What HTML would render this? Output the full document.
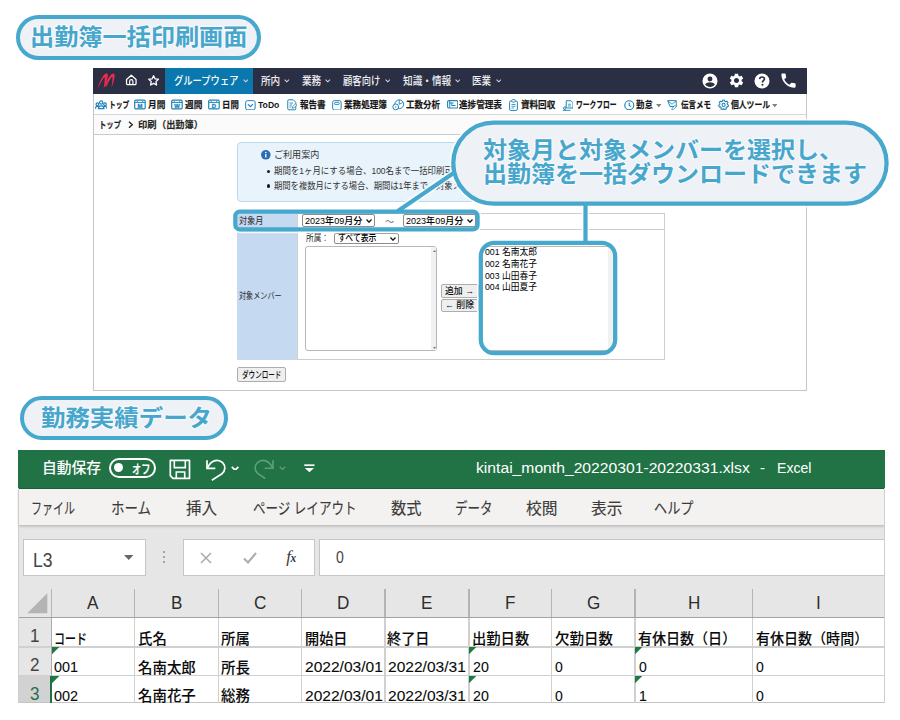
<!DOCTYPE html>
<html lang="ja"><head><meta charset="utf-8"><title>出勤簿一括印刷画面</title>
<style>
html,body{margin:0;padding:0;background:#fff}
body{width:900px;height:720px;position:relative;overflow:hidden;font-family:"Liberation Sans",sans-serif}
#p{position:absolute;left:0;top:0;width:900px;height:720px;overflow:hidden}
#p div,#p svg.a,#p svg.g,#p span.h,#p span.l{position:absolute}
svg.g{overflow:visible}
svg.g text{font-family:"Liberation Sans","Noto Sans CJK JP",sans-serif;font-size:1000px}
span.h{color:transparent;white-space:nowrap;overflow:hidden;font-family:"Liberation Sans",sans-serif}
span.l{white-space:pre;font-family:"Liberation Sans",sans-serif}
</style></head><body>
<div id="p"><div style="left:16px;top:15px;width:245px;height:45px;box-sizing:border-box;border:4px solid #47a8cd;border-radius:23px;background:#eef1f6"></div><svg class="g" style="left:30.40px;top:25.04px;width:217.40px;height:27.22px;fill:#46a6cc;stroke:#f6f8fb;stroke-width:110;stroke-linejoin:round;paint-order:stroke" viewBox="0 -880 9000 1200" preserveAspectRatio="none"><text x="0" y="0" textLength="9000" lengthAdjust="spacingAndGlyphs" font-weight="700">出勤簿一括印刷画面</text></svg><div style="left:93px;top:68px;width:714.2px;height:322.5px;box-sizing:border-box;border:1px solid #c6c6c6;background:#fff"></div><div style="left:93px;top:68px;width:714.2px;height:25.5px;background:#2b2f43"></div><div style="left:165px;top:68px;width:88.3px;height:25.5px;background:#0a78ae"></div><svg class="a" style="left:96px;top:71px" width="20" height="20" viewBox="0 0 20 20"><path fill="#ea2a4e" d="M1.500 17.800C3 12 6 5.500 9 3c1.800-1.500 3.200-.3 2.800 2.200C11.100 9.500 9.500 14 7.500 18c.6-4 1.300-8 1.300-10.800 0-1.200-.4-1.200-1-.4C5.800 9.600 3.500 14 1.500 17.800z"/><path fill="#ea2a4e" d="M8.600 15.200c1.900-4.900 4.400-9.900 7.100-12.100 1.800-1.500 3.300-.3 3 2.100-.5 4-1.600 7.600-3.200 11.300.5-3.400 1-7.200 1-9.800 0-1.200-.4-1.200-1-.4-1.700 2.300-3.400 5.600-4.900 8.900z"/></svg><svg class="a" style="left:124.500px;top:74.100px" width="12.600" height="11.700" viewBox="0 0 14 13"><path d="M1.700 6.200L7 1.400l5.300 4.800V10.500a1.200 1.200 0 0 1-1.200 1.200H2.900A1.200 1.200 0 0 1 1.700 10.500z" fill="none" stroke="#fff" stroke-width="1.400" stroke-linejoin="round"/><path d="M5.200 11.500V8a1.800 1.800 0 0 1 3.600 0v3.500" fill="none" stroke="#fff" stroke-width="1.300"/></svg><svg class="a" style="left:147.200px;top:73.800px" width="13.200" height="13.200" viewBox="0 0 24 24"><path d="M12 3.200l2.700 5.600 6.100.8-4.500 4.300 1.100 6.100L12 17.100 6.600 20l1.100-6.100L3.200 9.600l6.100-.8z" fill="none" stroke="#fff" stroke-width="2.400" stroke-linejoin="round"/></svg><svg class="g" style="left:173.80px;top:74.52px;width:64.50px;height:13.20px;fill:#fff" viewBox="0 -880 7000 1200" preserveAspectRatio="none"><text x="0" y="0" textLength="7000" lengthAdjust="spacingAndGlyphs" font-weight="500">グループウェア</text></svg><svg class="a" style="left:243px;top:79.3px" width="5.6" height="3.36" viewBox="0 0 10 6"><path d="M1 1 L5 5 L9 1" fill="none" stroke="#d4d6e0" stroke-width="1.9"/></svg><svg class="g" style="left:260.60px;top:74.52px;width:19.20px;height:13.20px;fill:#eeeff5" viewBox="0 -880 2000 1200" preserveAspectRatio="none"><text x="0" y="0" textLength="2000" lengthAdjust="spacingAndGlyphs" font-weight="500">所内</text></svg><svg class="a" style="left:284px;top:79.3px" width="5.6" height="3.36" viewBox="0 0 10 6"><path d="M1 1 L5 5 L9 1" fill="none" stroke="#d4d6e0" stroke-width="1.9"/></svg><svg class="g" style="left:302.00px;top:74.52px;width:19.20px;height:13.20px;fill:#eeeff5" viewBox="0 -880 2000 1200" preserveAspectRatio="none"><text x="0" y="0" textLength="2000" lengthAdjust="spacingAndGlyphs" font-weight="500">業務</text></svg><svg class="a" style="left:325.3px;top:79.3px" width="5.6" height="3.36" viewBox="0 0 10 6"><path d="M1 1 L5 5 L9 1" fill="none" stroke="#d4d6e0" stroke-width="1.9"/></svg><svg class="g" style="left:343.00px;top:74.52px;width:37.30px;height:13.20px;fill:#eeeff5" viewBox="0 -880 4000 1200" preserveAspectRatio="none"><text x="0" y="0" textLength="4000" lengthAdjust="spacingAndGlyphs" font-weight="500">顧客向け</text></svg><svg class="a" style="left:384.8px;top:79.3px" width="5.6" height="3.36" viewBox="0 0 10 6"><path d="M1 1 L5 5 L9 1" fill="none" stroke="#d4d6e0" stroke-width="1.9"/></svg><svg class="g" style="left:402.80px;top:74.52px;width:48.20px;height:13.20px;fill:#eeeff5" viewBox="0 -880 5000 1200" preserveAspectRatio="none"><text x="0" y="0" textLength="5000" lengthAdjust="spacingAndGlyphs" font-weight="500">知識・情報</text></svg><svg class="a" style="left:454.5px;top:79.3px" width="5.6" height="3.36" viewBox="0 0 10 6"><path d="M1 1 L5 5 L9 1" fill="none" stroke="#d4d6e0" stroke-width="1.9"/></svg><svg class="g" style="left:472.30px;top:74.52px;width:19.00px;height:13.20px;fill:#eeeff5" viewBox="0 -880 2000 1200" preserveAspectRatio="none"><text x="0" y="0" textLength="2000" lengthAdjust="spacingAndGlyphs" font-weight="500">医業</text></svg><svg class="a" style="left:495.5px;top:79.3px" width="5.6" height="3.36" viewBox="0 0 10 6"><path d="M1 1 L5 5 L9 1" fill="none" stroke="#d4d6e0" stroke-width="1.9"/></svg><svg class="a" style="left:701.500px;top:72.500px" width="16" height="16" viewBox="0 0 24 24"><circle cx="12" cy="12" r="11.300" fill="#fff"/><circle cx="12" cy="9" r="3.700" fill="#2b2f43"/><path d="M4.600 17.400c1.600-2.400 4.300-3.500 7.400-3.500s5.800 1.100 7.400 3.500c-1.900 2.400-4.400 3.600-7.400 3.600s-5.500-1.200-7.400-3.600z" fill="#2b2f43"/></svg><svg class="a" style="left:727.500px;top:72px" width="17" height="17" viewBox="0 0 24 24"><path fill="#fff" d="M19.140 12.940c.04-.3.060-.61.060-.94 0-.32-.020-.64-.07-.94l2.030-1.580c.18-.14.23-.41.12-.61l-1.920-3.320c-.12-.22-.37-.29-.59-.22l-2.390.96c-.5-.38-1.030-.7-1.620-.94l-.36-2.540c-.04-.24-.24-.41-.48-.41h-3.840c-.24 0-.43.17-.47.41l-.36 2.540c-.59.24-1.130.57-1.620.94l-2.390-.96c-.22-.08-.47 0-.59.220L2.740 8.870c-.12.210-.080.470.12.610l2.030 1.580c-.05.300-.09.630-.09.940s.020.640.07.940l-2.030 1.580c-.18.140-.23.410-.12.610l1.920 3.320c.12.220.37.290.59.220l2.390-.96c.5.380 1.030.7 1.620.94l.36 2.540c.05.240.24.410.48.410h3.840c.24 0 .44-.17.470-.41l.36-2.540c.59-.24 1.130-.56 1.620-.94l2.390.96c.22.080.47 0 .59-.22l1.920-3.320c.12-.22.070-.47-.12-.61l-2.010-1.580zM12 15.600c-1.980 0-3.600-1.620-3.600-3.600s1.620-3.600 3.600-3.600 3.600 1.620 3.600 3.600-1.620 3.600-3.600 3.600z"/></svg><svg class="a" style="left:754px;top:72.500px" width="16" height="16" viewBox="0 0 24 24"><circle cx="12" cy="12" r="11.300" fill="#fff"/><path d="M8.400 9.300c.2-2.100 1.700-3.300 3.700-3.300 2.100 0 3.500 1.200 3.500 3 0 1.300-.7 2-1.700 2.700-.9.600-1.200 1.100-1.200 2.100v.3" fill="none" stroke="#2b2f43" stroke-width="2.500"/><circle cx="12.700" cy="17.700" r="1.600" fill="#2b2f43"/></svg><svg class="a" style="left:779px;top:71px" width="19" height="19" viewBox="0 0 24 24"><path fill="#fff" d="M6.620 10.790c1.440 2.830 3.760 5.140 6.590 6.590l2.200-2.200c.27-.27.670-.36 1.020-.24 1.120.37 2.330.57 3.570.57.550 0 1 .45 1 1V20c0 .55-.45 1-1 1-9.390 0-17-7.610-17-17 0-.55.450-1 1-1h3.500c.55 0 1 .45 1 1 0 1.250.2 2.450.57 3.570.11.350.03.740-.25 1.020l-2.200 2.200z"/></svg><div style="left:94px;top:93.5px;width:712.2px;height:20.5px;background:#fff;border-bottom:1px solid #d6d6d6"></div><svg class="a" style="left:94.800px;top:100px" width="12.400" height="9.500" viewBox="0 0 25 19"><g fill="none" stroke="#1f84ba" stroke-width="2.400"><circle cx="12.500" cy="5" r="3.300"/><circle cx="4.800" cy="8.500" r="2.700"/><circle cx="20.200" cy="8.500" r="2.700"/><path d="M6.800 17.500c.4-4 2.800-5.800 5.700-5.800s5.300 1.800 5.700 5.800zM1 17.500c0-3 1.300-4.800 3.600-4.800 1 0 1.800.3 2.400 1M24 17.500c0-3-1.300-4.800-3.600-4.800-1 0-1.800.3-2.400 1"/></g></svg><svg class="g" style="left:108.70px;top:100.22px;width:20.30px;height:11.16px;fill:#161616;stroke:#161616;stroke-width:22" viewBox="0 -880 3000 1200" preserveAspectRatio="none"><text x="0" y="0" textLength="3000" lengthAdjust="spacingAndGlyphs" font-weight="700">トップ</text></svg><svg class="a" style="left:134.4px;top:99.400px" width="12" height="11" viewBox="0 0 12 11"><rect x="0.700" y="1.200" width="10.500" height="8.700" rx="1.100" fill="#fff" stroke="#1f84ba" stroke-width="1.200"/><path d="M0.700 3.500H11.200" stroke="#1f84ba" stroke-width="0.900"/><path d="M3.200 1.700V2.900M8.700 1.700V2.900" stroke="#1f84ba" stroke-width="1"/><text x="5.950" y="8.800" font-size="5.900" font-weight="bold" text-anchor="middle" fill="#1f84ba" stroke="#1f84ba" stroke-width="0.300" font-family="Liberation Sans">M</text></svg><svg class="g" style="left:147.70px;top:100.22px;width:17.30px;height:11.16px;fill:#161616;stroke:#161616;stroke-width:22" viewBox="0 -880 2000 1200" preserveAspectRatio="none"><text x="0" y="0" textLength="2000" lengthAdjust="spacingAndGlyphs" font-weight="700">月間</text></svg><svg class="a" style="left:171px;top:99.400px" width="12" height="11" viewBox="0 0 12 11"><rect x="0.700" y="1.200" width="10.500" height="8.700" rx="1.100" fill="#fff" stroke="#1f84ba" stroke-width="1.200"/><path d="M0.700 3.500H11.200" stroke="#1f84ba" stroke-width="0.900"/><path d="M3.200 1.700V2.900M8.700 1.700V2.900" stroke="#1f84ba" stroke-width="1"/><text x="5.950" y="8.800" font-size="5.900" font-weight="bold" text-anchor="middle" fill="#1f84ba" stroke="#1f84ba" stroke-width="0.300" font-family="Liberation Sans">W</text></svg><svg class="g" style="left:185.00px;top:100.22px;width:17.30px;height:11.16px;fill:#161616;stroke:#161616;stroke-width:22" viewBox="0 -880 2000 1200" preserveAspectRatio="none"><text x="0" y="0" textLength="2000" lengthAdjust="spacingAndGlyphs" font-weight="700">週間</text></svg><svg class="a" style="left:207.5px;top:99.400px" width="12" height="11" viewBox="0 0 12 11"><rect x="0.700" y="1.200" width="10.500" height="8.700" rx="1.100" fill="#fff" stroke="#1f84ba" stroke-width="1.200"/><path d="M0.700 3.500H11.200" stroke="#1f84ba" stroke-width="0.900"/><path d="M3.200 1.700V2.900M8.700 1.700V2.900" stroke="#1f84ba" stroke-width="1"/><text x="5.950" y="8.800" font-size="5.900" font-weight="bold" text-anchor="middle" fill="#1f84ba" stroke="#1f84ba" stroke-width="0.300" font-family="Liberation Sans">D</text></svg><svg class="g" style="left:222.20px;top:100.22px;width:16.80px;height:11.16px;fill:#161616;stroke:#161616;stroke-width:22" viewBox="0 -880 2000 1200" preserveAspectRatio="none"><text x="0" y="0" textLength="2000" lengthAdjust="spacingAndGlyphs" font-weight="700">日間</text></svg><svg class="a" style="left:245px;top:99.700px" width="10.800" height="10.500" viewBox="0 0 21.600 21"><rect x="1.300" y="1.300" width="19" height="18.400" rx="3.500" fill="none" stroke="#1f84ba" stroke-width="2"/><path d="M5.800 8.300l5 5 5-5" fill="none" stroke="#1f84ba" stroke-width="2.300"/></svg><span class="l" style="left:258.40px;top:99.37px;font-size:9.8px;line-height:11.27px;color:#161616;font-weight:bold;transform:scaleX(0.8787);transform-origin:0 0;">ToDo</span><svg class="a" style="left:287px;top:99.200px" width="10" height="11.600" viewBox="0 0 20 23"><path d="M3.500 1.500h9l5 5v13a2 2 0 0 1-2 2h-12a2 2 0 0 1-2-2v-16a2 2 0 0 1 2-2z" fill="none" stroke="#1f84ba" stroke-width="2"/><path d="M5 8h7M5 12h5M5 16h4" stroke="#1f84ba" stroke-width="1.800"/><path d="M10.500 18.500l1-3.500 5.500-5.500 2.500 2.500-5.500 5.500z" fill="#fff" stroke="#1f84ba" stroke-width="1.500"/></svg><svg class="g" style="left:299.70px;top:100.22px;width:25.60px;height:11.16px;fill:#161616;stroke:#161616;stroke-width:22" viewBox="0 -880 3000 1200" preserveAspectRatio="none"><text x="0" y="0" textLength="3000" lengthAdjust="spacingAndGlyphs" font-weight="700">報告書</text></svg><svg class="a" style="left:332px;top:99.600px" width="9.800" height="10.700" viewBox="0 0 19.600 21.400"><rect x="1.300" y="1.300" width="17" height="18.800" rx="3.500" fill="none" stroke="#1f84ba" stroke-width="2"/><rect x="5.300" y="4.800" width="9" height="4.200" rx="1" fill="none" stroke="#1f84ba" stroke-width="1.700"/></svg><svg class="g" style="left:344.40px;top:100.22px;width:42.90px;height:11.16px;fill:#161616;stroke:#161616;stroke-width:22" viewBox="0 -880 5000 1200" preserveAspectRatio="none"><text x="0" y="0" textLength="5000" lengthAdjust="spacingAndGlyphs" font-weight="700">業務処理簿</text></svg><svg class="a" style="left:392.300px;top:99.300px" width="12.700" height="11.400" viewBox="0 0 25.400 22.800"><circle cx="14.500" cy="10.500" r="8.800" fill="none" stroke="#1f84ba" stroke-width="2"/><circle cx="7.500" cy="15.800" r="5.800" fill="#fff" stroke="#1f84ba" stroke-width="2"/><circle cx="7.500" cy="15.800" r="1.400" fill="#1f84ba"/><path d="M14.500 10.500V2M14.500 10.500l7-3.500" stroke="#1f84ba" stroke-width="1.800" fill="none"/></svg><svg class="g" style="left:406.40px;top:100.22px;width:33.90px;height:11.16px;fill:#161616;stroke:#161616;stroke-width:22" viewBox="0 -880 4000 1200" preserveAspectRatio="none"><text x="0" y="0" textLength="4000" lengthAdjust="spacingAndGlyphs" font-weight="700">工数分析</text></svg><svg class="a" style="left:446.700px;top:100.200px" width="11.400" height="8.600" viewBox="0 0 22.800 17.200"><rect x="1.200" y="1.200" width="20.400" height="14.800" rx="2.500" fill="none" stroke="#1f84ba" stroke-width="2.200"/><path d="M5.500 1.500V15.500M5.500 6H13M9.500 6V11H17" fill="none" stroke="#1f84ba" stroke-width="2"/></svg><svg class="g" style="left:459.40px;top:100.22px;width:42.90px;height:11.16px;fill:#161616;stroke:#161616;stroke-width:22" viewBox="0 -880 5000 1200" preserveAspectRatio="none"><text x="0" y="0" textLength="5000" lengthAdjust="spacingAndGlyphs" font-weight="700">進捗管理表</text></svg><svg class="a" style="left:509.200px;top:99px" width="9" height="12" viewBox="0 0 18 24"><rect x="1.200" y="4" width="15.600" height="18.800" rx="2.500" fill="none" stroke="#1f84ba" stroke-width="2"/><rect x="5.500" y="1.200" width="7" height="5" rx="1.500" fill="#fff" stroke="#1f84ba" stroke-width="1.800"/><path d="M5 11h8M5 14.500h8M5 18h5" stroke="#1f84ba" stroke-width="1.600"/></svg><svg class="g" style="left:521.40px;top:100.22px;width:34.20px;height:11.16px;fill:#161616;stroke:#161616;stroke-width:22" viewBox="0 -880 4000 1200" preserveAspectRatio="none"><text x="0" y="0" textLength="4000" lengthAdjust="spacingAndGlyphs" font-weight="700">資料回収</text></svg><svg class="a" style="left:561.700px;top:99.500px" width="11.600" height="11.200" viewBox="0 0 23.200 22.400"><path d="M8.500 1.500h9.500l4 4v10.500H8.500z" fill="none" stroke="#1f84ba" stroke-width="2"/><path d="M12 8.500h6M12 12h6" stroke="#1f84ba" stroke-width="1.600"/><path d="M1.500 20.800H17M2 16.500l4.500-3.500v7z" fill="none" stroke="#1f84ba" stroke-width="1.800"/></svg><svg class="g" style="left:575.50px;top:100.22px;width:40.60px;height:11.16px;fill:#161616;stroke:#161616;stroke-width:22" viewBox="0 -880 6000 1200" preserveAspectRatio="none"><text x="0" y="0" textLength="6000" lengthAdjust="spacingAndGlyphs" font-weight="700">ワークフロー</text></svg><svg class="a" style="left:624px;top:99.700px" width="10.500" height="10.500" viewBox="0 0 21 21"><circle cx="10.500" cy="10.500" r="9" fill="none" stroke="#1f84ba" stroke-width="2.300"/><path d="M10.500 5v6l3.800 2.300" fill="none" stroke="#1f84ba" stroke-width="2.200"/></svg><svg class="g" style="left:636.00px;top:100.22px;width:16.80px;height:11.16px;fill:#161616;stroke:#161616;stroke-width:22" viewBox="0 -880 2000 1200" preserveAspectRatio="none"><text x="0" y="0" textLength="2000" lengthAdjust="spacingAndGlyphs" font-weight="700">勤怠</text></svg><svg class="a" style="left:655.600px;top:103.600px" width="5.600" height="3.600" viewBox="0 0 6 4"><path d="M0 0h6l-3 3.800z" fill="#808080"/></svg><svg class="a" style="left:667.300px;top:99.800px" width="10.500" height="10.600" viewBox="0 0 21 21.200"><path d="M1.300 1.300H18.500V13H6z" fill="none" stroke="#1f84ba" stroke-width="2" stroke-linejoin="round"/><path d="M2 2l8 6.500 8-6.500" fill="none" stroke="#1f84ba" stroke-width="1.700"/><path d="M9.500 19.800l1-3.500 5.500-5.500 2.500 2.500-5.500 5.500z" fill="#fff" stroke="#1f84ba" stroke-width="1.500"/></svg><svg class="g" style="left:681.40px;top:100.22px;width:29.90px;height:11.16px;fill:#161616;stroke:#161616;stroke-width:22" viewBox="0 -880 4000 1200" preserveAspectRatio="none"><text x="0" y="0" textLength="4000" lengthAdjust="spacingAndGlyphs" font-weight="700">伝言メモ</text></svg><svg class="a" style="left:718.300px;top:99.300px" width="11.200" height="11.400" viewBox="0 0 24 24"><path fill="none" stroke="#1f84ba" stroke-width="2.300" stroke-linejoin="round" d="M10 2h4l.6 2.700 1.900.9 2.500-1.300 2.500 3-1.700 2.200.4 2.100 2.300 1.300-1 3.800-2.800-.1-1.400 1.600.4 2.800-3.700 1.400L12 20.300l-2 2.100-3.700-1.400.4-2.800-1.400-1.600-2.800.1-1-3.800 2.300-1.300.4-2.100L2.500 7.300l2.500-3 2.500 1.300 1.900-.9z"/><circle cx="12" cy="12.400" r="3.300" fill="none" stroke="#1f84ba" stroke-width="2.200"/></svg><svg class="g" style="left:730.70px;top:100.22px;width:39.00px;height:11.16px;fill:#161616;stroke:#161616;stroke-width:22" viewBox="0 -880 5000 1200" preserveAspectRatio="none"><text x="0" y="0" textLength="5000" lengthAdjust="spacingAndGlyphs" font-weight="700">個人ツール</text></svg><svg class="a" style="left:771.500px;top:103.600px" width="5.600" height="3.600" viewBox="0 0 6 4"><path d="M0 0h6l-3 3.800z" fill="#808080"/></svg><div style="left:94px;top:115px;width:712.2px;height:19px;background:#fbfbfb;border-bottom:1px solid #cbcbcb"></div><svg class="g" style="left:99.00px;top:120.15px;width:22.00px;height:11.52px;fill:#1e1e1e;stroke:#1e1e1e;stroke-width:14" viewBox="0 -880 3000 1200" preserveAspectRatio="none"><text x="0" y="0" textLength="3000" lengthAdjust="spacingAndGlyphs" font-weight="700">トップ</text></svg><svg class="a" style="left:127.600px;top:121.300px" width="5.500" height="7.500" viewBox="0 0 5.500 7.500"><path d="M1 .8L4.300 3.750 1 6.700" fill="none" stroke="#222" stroke-width="1.400"/></svg><svg class="g" style="left:137.70px;top:120.15px;width:18.60px;height:11.52px;fill:#1e1e1e;stroke:#1e1e1e;stroke-width:14" viewBox="0 -880 2000 1200" preserveAspectRatio="none"><text x="0" y="0" textLength="2000" lengthAdjust="spacingAndGlyphs" font-weight="700">印刷</text></svg><svg class="g" style="left:156.80px;top:120.15px;width:45.80px;height:11.52px;fill:#1e1e1e;stroke:#1e1e1e;stroke-width:14" viewBox="0 -880 5000 1200" preserveAspectRatio="none"><text x="0" y="0" textLength="5000" lengthAdjust="spacingAndGlyphs" font-weight="700">（出勤簿）</text></svg><div style="left:237px;top:142.3px;width:428px;height:60px;box-sizing:border-box;border:1px solid #b5dcf1;border-radius:4px;background:#e8f3fc"></div><svg class="a" style="left:261.300px;top:150.400px" width="9.600" height="9.600" viewBox="0 0 20 20"><circle cx="10" cy="10" r="10" fill="#2a6db3"/><rect x="8.600" y="8.500" width="2.800" height="7" fill="#fff"/><circle cx="10" cy="5.300" r="1.700" fill="#fff"/></svg><svg class="g" style="left:274.00px;top:150.22px;width:45.30px;height:11.16px;fill:#333" viewBox="0 -880 5000 1200" preserveAspectRatio="none"><text x="0" y="0" textLength="5000" lengthAdjust="spacingAndGlyphs" font-weight="400">ご利用案内</text></svg><div style="left:266.500px;top:169.700px;width:3.400px;height:3.400px;border-radius:50%;background:#1a1a1a"></div><div style="left:266.500px;top:184.300px;width:3.400px;height:3.400px;border-radius:50%;background:#1a1a1a"></div><svg class="g" style="left:274.00px;top:166.30px;width:211.78px;height:11.04px;fill:#333" viewBox="0 -880 23020 1200" preserveAspectRatio="none"><text x="0" y="0" textLength="23020" lengthAdjust="spacingAndGlyphs" font-weight="400">期間を1ヶ月にする場合、100名まで一括印刷可能です。</text></svg><svg class="g" style="left:274.00px;top:180.90px;width:311.56px;height:11.04px;fill:#333" viewBox="0 -880 33865 1200" preserveAspectRatio="none"><text x="0" y="0" textLength="33865" lengthAdjust="spacingAndGlyphs" font-weight="400">期間を複数月にする場合、期間は1年まで、対象メンバーは10名まで選択可能です。</text></svg><div style="left:236.5px;top:212.5px;width:428.5px;height:147.3px;box-sizing:border-box;border:1px solid #cdcdcd;background:#fff"></div><div style="left:236.5px;top:212.5px;width:60px;height:147.3px;background:#c5d9f1"></div><div style="left:236.5px;top:229.3px;width:428.5px;height:1px;background:#cdcdcd"></div><div style="left:296.5px;top:212.5px;width:1px;height:147.3px;background:#d0d0d0"></div><svg class="g" style="left:239.00px;top:216.28px;width:24.40px;height:10.80px;fill:#2a2a2a" viewBox="0 -880 3000 1200" preserveAspectRatio="none"><text x="0" y="0" textLength="3000" lengthAdjust="spacingAndGlyphs" font-weight="400">対象月</text></svg><svg class="g" style="left:239.00px;top:291.28px;width:42.60px;height:10.80px;fill:#2a2a2a" viewBox="0 -880 6000 1200" preserveAspectRatio="none"><text x="0" y="0" textLength="6000" lengthAdjust="spacingAndGlyphs" font-weight="400">対象メンバー</text></svg><div style="left:302px;top:214px;width:73px;height:13px;box-sizing:border-box;border:1px solid #8c8c8c;border-radius:2px;background:#fff"></div><svg class="g" style="left:305.30px;top:216.23px;width:57.30px;height:11.28px;fill:#000" viewBox="0 -880 6420 1200" preserveAspectRatio="none"><text x="0" y="0" textLength="6420" lengthAdjust="spacingAndGlyphs" font-weight="500">2023年09月分</text></svg><svg class="a" style="left:365.8px;top:218.8px" width="6" height="4" viewBox="0 0 6 4"><path d="M.5 .5L3 3.200 5.500 .5" fill="none" stroke="#111" stroke-width="1.250"/></svg><svg class="g" style="left:384.50px;top:216.88px;width:9.00px;height:10.80px;fill:#666" viewBox="0 -880 1000 1200" preserveAspectRatio="none"><text x="0" y="0" textLength="1000" lengthAdjust="spacingAndGlyphs" font-weight="400">～</text></svg><div style="left:403px;top:214px;width:73px;height:13px;box-sizing:border-box;border:1px solid #8c8c8c;border-radius:2px;background:#fff"></div><svg class="g" style="left:406.10px;top:216.23px;width:57.30px;height:11.28px;fill:#000" viewBox="0 -880 6420 1200" preserveAspectRatio="none"><text x="0" y="0" textLength="6420" lengthAdjust="spacingAndGlyphs" font-weight="500">2023年09月分</text></svg><svg class="a" style="left:466.8px;top:218.8px" width="6" height="4" viewBox="0 0 6 4"><path d="M.5 .5L3 3.200 5.500 .5" fill="none" stroke="#111" stroke-width="1.250"/></svg><svg class="g" style="left:306.00px;top:233.38px;width:23.00px;height:10.80px;fill:#2a2a2a" viewBox="0 -880 3000 1200" preserveAspectRatio="none"><text x="0" y="0" textLength="3000" lengthAdjust="spacingAndGlyphs" font-weight="400">所属：</text></svg><div style="left:334px;top:233px;width:65px;height:11px;box-sizing:border-box;border:1px solid #8c8c8c;border-radius:2px;background:#fff"></div><svg class="g" style="left:337.50px;top:233.23px;width:38.50px;height:11.28px;fill:#000" viewBox="0 -880 5000 1200" preserveAspectRatio="none"><text x="0" y="0" textLength="5000" lengthAdjust="spacingAndGlyphs" font-weight="500">すべて表示</text></svg><svg class="a" style="left:389.8px;top:236.8px" width="6" height="4" viewBox="0 0 6 4"><path d="M.5 .5L3 3.200 5.500 .5" fill="none" stroke="#111" stroke-width="1.250"/></svg><div style="left:305px;top:246px;width:132px;height:105px;box-sizing:border-box;border:1px solid #b8b8b8;border-radius:3px;background:#fff"></div><div style="left:431px;top:247px;width:5px;height:103px;background:#f1f1f1"></div><svg class="a" style="left:432.500px;top:249.500px" width="3" height="2"><path d="M0 2L1.500 0 3 2z" fill="#777"/></svg><svg class="a" style="left:432.500px;top:346.500px" width="3" height="2"><path d="M0 0L1.500 2 3 0z" fill="#777"/></svg><div style="left:441px;top:284px;width:38px;height:14px;box-sizing:border-box;border:1px solid #adadad;border-radius:2px;background:#efefef"></div><svg class="g" style="left:445.30px;top:286.22px;width:29.00px;height:11.16px;fill:#111" viewBox="0 -880 3300 1200" preserveAspectRatio="none"><text x="0" y="0" textLength="3300" lengthAdjust="spacingAndGlyphs" font-weight="500">追加 →</text></svg><div style="left:441px;top:299px;width:38px;height:13px;box-sizing:border-box;border:1px solid #adadad;border-radius:2px;background:#efefef"></div><svg class="g" style="left:445.30px;top:300.22px;width:29.00px;height:11.16px;fill:#111" viewBox="0 -880 3300 1200" preserveAspectRatio="none"><text x="0" y="0" textLength="3300" lengthAdjust="spacingAndGlyphs" font-weight="500">← 削除</text></svg><div style="left:237px;top:367px;width:49px;height:15px;box-sizing:border-box;border:1px solid #adadad;border-radius:2px;background:#efefef"></div><svg class="g" style="left:242.00px;top:370.22px;width:39.40px;height:11.16px;fill:#111" viewBox="0 -880 6000 1200" preserveAspectRatio="none"><text x="0" y="0" textLength="6000" lengthAdjust="spacingAndGlyphs" font-weight="500">ダウンロード</text></svg><div style="left:482px;top:246px;width:132px;height:105px;box-sizing:border-box;border:1px solid #b8b8b8;border-radius:3px;background:#fff"></div><div style="left:608px;top:247px;width:5px;height:103px;background:#f1f1f1"></div><svg class="g" style="left:485.20px;top:247.32px;width:52.00px;height:11.16px;fill:#000" viewBox="0 -880 5965 1200" preserveAspectRatio="none"><text x="0" y="0" textLength="5965" lengthAdjust="spacingAndGlyphs" font-weight="400">001 名南太郎</text></svg><svg class="g" style="left:485.20px;top:258.92px;width:52.00px;height:11.16px;fill:#000" viewBox="0 -880 5965 1200" preserveAspectRatio="none"><text x="0" y="0" textLength="5965" lengthAdjust="spacingAndGlyphs" font-weight="400">002 名南花子</text></svg><svg class="g" style="left:485.20px;top:270.52px;width:52.00px;height:11.16px;fill:#000" viewBox="0 -880 5965 1200" preserveAspectRatio="none"><text x="0" y="0" textLength="5965" lengthAdjust="spacingAndGlyphs" font-weight="400">003 山田春子</text></svg><svg class="g" style="left:485.20px;top:282.12px;width:52.00px;height:11.16px;fill:#000" viewBox="0 -880 5965 1200" preserveAspectRatio="none"><text x="0" y="0" textLength="5965" lengthAdjust="spacingAndGlyphs" font-weight="400">004 山田夏子</text></svg><svg class="a" style="left:0;top:0" width="900" height="420" viewBox="0 0 900 420"><g fill="none" stroke="#fff" stroke-opacity="0.850"><g stroke-width="7.400"><path d="M458 170L397.500 211.300"/><path d="M585.500 203V241.500"/></g><g stroke-width="1.800"><rect x="232.3" y="208.7" width="248.3" height="23.7" rx="7.5" /><rect x="477.8" y="239.8" width="140.4" height="116.4" rx="16.5" /><rect x="450.3" y="119.6" width="439.3" height="87" rx="43.5" /></g></g><g fill="none" stroke="#47a8cd" stroke-width="4.2"><path d="M458 170L397.500 211.300"/><path d="M585.500 203V241.500"/><rect x="235.3" y="211.7" width="242.3" height="17.7" rx="4.5" /><rect x="480.8" y="242.8" width="134.4" height="110.4" rx="13.5" /><rect x="453.3" y="122.6" width="433.3" height="81" rx="40.5" fill="#eef1f6"/></g></svg><svg class="g" style="left:483.40px;top:137.54px;width:360.00px;height:27.22px;fill:#46a6cc;stroke:#f6f8fb;stroke-width:110;stroke-linejoin:round;paint-order:stroke" viewBox="0 -880 15000 1200" preserveAspectRatio="none"><text x="0" y="0" textLength="15000" lengthAdjust="spacingAndGlyphs" font-weight="700">対象月と対象メンバーを選択し、</text></svg><svg class="g" style="left:483.40px;top:161.64px;width:384.00px;height:27.22px;fill:#46a6cc;stroke:#f6f8fb;stroke-width:110;stroke-linejoin:round;paint-order:stroke" viewBox="0 -880 16000 1200" preserveAspectRatio="none"><text x="0" y="0" textLength="16000" lengthAdjust="spacingAndGlyphs" font-weight="700">出勤簿を一括ダウンロードできます</text></svg><div style="left:20px;top:396px;width:208px;height:44px;box-sizing:border-box;border:4px solid #47a8cd;border-radius:22px;background:#eef1f6"></div><svg class="g" style="left:40.60px;top:406.03px;width:171.00px;height:27.50px;fill:#46a6cc;stroke:#f6f8fb;stroke-width:110;stroke-linejoin:round;paint-order:stroke" viewBox="0 -880 7000 1200" preserveAspectRatio="none"><text x="0" y="0" textLength="7000" lengthAdjust="spacingAndGlyphs" font-weight="700">勤務実績データ</text></svg><div style="left:17.5px;top:450.4px;width:867px;height:252.9px;background:#e6e6e6"></div><div style="left:17.5px;top:450.4px;width:867px;height:38.4px;background:#217346;border-bottom:1px solid #17603a;box-sizing:border-box"></div><svg class="g" style="left:42.00px;top:459.84px;width:59.00px;height:18.36px;fill:#fff" viewBox="0 -880 4000 1200" preserveAspectRatio="none"><text x="0" y="0" textLength="4000" lengthAdjust="spacingAndGlyphs" font-weight="500">自動保存</text></svg><div style="left:109px;top:457.8px;width:46.6px;height:20px;box-sizing:border-box;border:2px solid #fff;border-radius:10px"></div><div style="left:113.7px;top:463.1px;width:9.4px;height:9.4px;background:#fff;border-radius:50%"></div><svg class="g" style="left:131.60px;top:462.74px;width:18.40px;height:14.40px;fill:#fff" viewBox="0 -880 2000 1200" preserveAspectRatio="none"><text x="0" y="0" textLength="2000" lengthAdjust="spacingAndGlyphs" font-weight="700">オフ</text></svg><svg class="a" style="left:169.300px;top:459.300px" width="22" height="21" viewBox="0 0 22 21"><path d="M1.300 1.400H20.500V19.400H4L1.300 16.700Z" fill="none" stroke="#fff" stroke-width="1.700" stroke-linejoin="round"/><path d="M5.300 1.400V8.600H16.300V1.400M7.300 19.400V13H15.700V19.400" fill="none" stroke="#fff" stroke-width="1.600"/></svg><svg class="a" style="left:205px;top:458.800px" width="22" height="22" viewBox="0 0 22 22"><path d="M2 1.300V9.300H10.300" fill="none" stroke="#fff" stroke-width="1.700"/><path d="M2.300 9C4.800 4 8.300 1.400 12 1.400C16.500 1.400 20 4.900 19.800 9.400C19.700 11.900 18.500 13.400 17 14.700L6.800 21.200" fill="none" stroke="#fff" stroke-width="1.700"/></svg><svg class="a" style="left:231.2px;top:465.5px" width="8.2" height="4.92" viewBox="0 0 10 6"><path d="M1 1 L5 5 L9 1" fill="none" stroke="#fff" stroke-width="2.2"/></svg><svg class="a" style="left:252.500px;top:458.800px" width="22" height="22" viewBox="0 0 22 22"><path d="M20 1.300V9.300H11.700" fill="none" stroke="#5e9e7d" stroke-width="1.600"/><path d="M19.700 9C17.200 4 13.700 1.400 10 1.400C5.500 1.400 2 4.900 2.200 9.400C2.300 11.900 3.500 13.400 5 14.700L12.200 19.500" fill="none" stroke="#5e9e7d" stroke-width="1.600"/></svg><svg class="a" style="left:278.8px;top:465.8px" width="7" height="4.2" viewBox="0 0 10 6"><path d="M1 1 L5 5 L9 1" fill="none" stroke="#5e9e7d" stroke-width="1.8"/></svg><svg class="a" style="left:303.500px;top:464px" width="11" height="9" viewBox="0 0 11 9"><path d="M.3 1.200H10.500" stroke="#fff" stroke-width="1.700"/><path d="M.8 4L5.400 8.300L10 4Z" fill="#fff"/></svg><span class="l" style="left:476.00px;top:458.89px;font-size:15.2px;line-height:17.48px;color:#fff;transform:scaleX(1.0326);transform-origin:0 0;">kintai_month_20220301-20220331.xlsx</span><span class="l" style="left:760.00px;top:458.89px;font-size:15.2px;line-height:17.48px;color:#fff;">-</span><span class="l" style="left:776.50px;top:458.89px;font-size:15.2px;line-height:17.48px;color:#fff;transform:scaleX(0.9282);transform-origin:0 0;">Excel</span><div style="left:17.5px;top:488.8px;width:867px;height:36.5px;background:#f3f2f1;box-shadow:0 1px 3px rgba(0,0,0,0.25);clip-path:inset(0 0 -6px 0)"></div><svg class="g" style="left:31.00px;top:500.36px;width:44.00px;height:18.60px;fill:#3b3b3b;stroke:#3b3b3b;stroke-width:8" viewBox="0 -880 4000 1200" preserveAspectRatio="none"><text x="0" y="0" textLength="4000" lengthAdjust="spacingAndGlyphs" font-weight="400">ファイル</text></svg><svg class="g" style="left:111.00px;top:500.36px;width:40.00px;height:18.60px;fill:#3b3b3b;stroke:#3b3b3b;stroke-width:8" viewBox="0 -880 3000 1200" preserveAspectRatio="none"><text x="0" y="0" textLength="3000" lengthAdjust="spacingAndGlyphs" font-weight="400">ホーム</text></svg><svg class="g" style="left:186.00px;top:500.36px;width:31.00px;height:18.60px;fill:#3b3b3b;stroke:#3b3b3b;stroke-width:8" viewBox="0 -880 2000 1200" preserveAspectRatio="none"><text x="0" y="0" textLength="2000" lengthAdjust="spacingAndGlyphs" font-weight="400">挿入</text></svg><svg class="g" style="left:252.50px;top:500.36px;width:103.50px;height:18.60px;fill:#3b3b3b;stroke:#3b3b3b;stroke-width:8" viewBox="0 -880 8300 1200" preserveAspectRatio="none"><text x="0" y="0" textLength="8300" lengthAdjust="spacingAndGlyphs" font-weight="400">ページ レイアウト</text></svg><svg class="g" style="left:391.00px;top:500.36px;width:30.50px;height:18.60px;fill:#3b3b3b;stroke:#3b3b3b;stroke-width:8" viewBox="0 -880 2000 1200" preserveAspectRatio="none"><text x="0" y="0" textLength="2000" lengthAdjust="spacingAndGlyphs" font-weight="400">数式</text></svg><svg class="g" style="left:455.00px;top:500.36px;width:37.50px;height:18.60px;fill:#3b3b3b;stroke:#3b3b3b;stroke-width:8" viewBox="0 -880 3000 1200" preserveAspectRatio="none"><text x="0" y="0" textLength="3000" lengthAdjust="spacingAndGlyphs" font-weight="400">データ</text></svg><svg class="g" style="left:526.00px;top:500.36px;width:31.50px;height:18.60px;fill:#3b3b3b;stroke:#3b3b3b;stroke-width:8" viewBox="0 -880 2000 1200" preserveAspectRatio="none"><text x="0" y="0" textLength="2000" lengthAdjust="spacingAndGlyphs" font-weight="400">校閲</text></svg><svg class="g" style="left:591.00px;top:500.36px;width:31.50px;height:18.60px;fill:#3b3b3b;stroke:#3b3b3b;stroke-width:8" viewBox="0 -880 2000 1200" preserveAspectRatio="none"><text x="0" y="0" textLength="2000" lengthAdjust="spacingAndGlyphs" font-weight="400">表示</text></svg><svg class="g" style="left:654.00px;top:500.36px;width:39.50px;height:18.60px;fill:#3b3b3b;stroke:#3b3b3b;stroke-width:8" viewBox="0 -880 3000 1200" preserveAspectRatio="none"><text x="0" y="0" textLength="3000" lengthAdjust="spacingAndGlyphs" font-weight="400">ヘルプ</text></svg><div style="left:23px;top:539.3px;width:123px;height:36.7px;box-sizing:border-box;border:1px solid #c6c6c6;background:#fff"></div><span class="l" style="left:32.70px;top:549.24px;font-size:19.6px;line-height:22.54px;color:#444;transform:scaleX(0.8944);transform-origin:0 0;">L3</span><svg class="a" style="left:123.800px;top:554.700px" width="9.500" height="5.200" viewBox="0 0 9.500 5.200"><path d="M0 0H9.500L4.750 5Z" fill="#666"/></svg><div style="left:163.3px;top:551.3px;width:2px;height:2px;background:#8c8c8c;border-radius:50%"></div><div style="left:163.3px;top:556.1px;width:2px;height:2px;background:#8c8c8c;border-radius:50%"></div><div style="left:163.3px;top:560.9px;width:2px;height:2px;background:#8c8c8c;border-radius:50%"></div><div style="left:182.5px;top:539.3px;width:132.5px;height:36.7px;box-sizing:border-box;border:1px solid #c6c6c6;background:#fff"></div><svg class="a" style="left:199.500px;top:552px" width="12" height="12" viewBox="0 0 12 12"><path d="M1 1L11 11M11 1L1 11" stroke="#adadad" stroke-width="1.600"/></svg><svg class="a" style="left:243px;top:552px" width="14" height="12" viewBox="0 0 14 12"><path d="M1 6.500L5 10.500L13 1" fill="none" stroke="#adadad" stroke-width="2.100"/></svg><span class="l" style="left:286.300px;top:546.500px;font-family:'Liberation Serif',serif;font-style:italic;font-size:17px;line-height:19px;color:#3a3a3a">f<span style="font-size:11.500px;font-weight:bold;margin-left:-0.500px">x</span></span><div style="left:318.5px;top:539.3px;width:566px;height:36.7px;box-sizing:border-box;border:1px solid #c6c6c6;background:#fff"></div><span class="l" style="left:335.60px;top:547.50px;font-size:16.6px;line-height:19.09px;color:#444;transform:scaleX(0.8449);transform-origin:0 0;">0</span><div style="left:17.5px;top:587.5px;width:867px;height:30.3px;background:#e6e6e6"></div><svg class="a" style="left:27px;top:593.300px" width="21" height="21"><path d="M20.300 0.300V20.300H0.300Z" fill="#b4b4b4"/></svg><span class="l" style="left:87.35px;top:591.89px;font-size:19px;line-height:21.85px;color:#2e2e2e;transform:scaleX(0.9000);transform-origin:0 0;">A</span><span class="l" style="left:170.85px;top:591.89px;font-size:19px;line-height:21.85px;color:#2e2e2e;transform:scaleX(0.9000);transform-origin:0 0;">B</span><span class="l" style="left:253.83px;top:591.89px;font-size:19px;line-height:21.85px;color:#2e2e2e;transform:scaleX(0.9000);transform-origin:0 0;">C</span><span class="l" style="left:337.18px;top:591.89px;font-size:19px;line-height:21.85px;color:#2e2e2e;transform:scaleX(0.9000);transform-origin:0 0;">D</span><span class="l" style="left:421.30px;top:591.89px;font-size:19px;line-height:21.85px;color:#2e2e2e;transform:scaleX(0.9000);transform-origin:0 0;">E</span><span class="l" style="left:505.03px;top:591.89px;font-size:19px;line-height:21.85px;color:#2e2e2e;transform:scaleX(0.9000);transform-origin:0 0;">F</span><span class="l" style="left:586.60px;top:591.89px;font-size:19px;line-height:21.85px;color:#2e2e2e;transform:scaleX(0.9000);transform-origin:0 0;">G</span><span class="l" style="left:687.58px;top:591.89px;font-size:19px;line-height:21.85px;color:#2e2e2e;transform:scaleX(0.9000);transform-origin:0 0;">H</span><span class="l" style="left:816.12px;top:591.89px;font-size:19px;line-height:21.85px;color:#2e2e2e;transform:scaleX(0.9000);transform-origin:0 0;">I</span><div style="left:50.7px;top:589px;width:1.2px;height:28.8px;background:#b4b4b4"></div><div style="left:134.2px;top:589px;width:1.2px;height:28.8px;background:#b4b4b4"></div><div style="left:217.7px;top:589px;width:1.2px;height:28.8px;background:#b4b4b4"></div><div style="left:301.1px;top:589px;width:1.2px;height:28.8px;background:#b4b4b4"></div><div style="left:384.4px;top:589px;width:1.2px;height:28.8px;background:#b4b4b4"></div><div style="left:468.4px;top:589px;width:1.2px;height:28.8px;background:#b4b4b4"></div><div style="left:550.9px;top:589px;width:1.2px;height:28.8px;background:#b4b4b4"></div><div style="left:634.4px;top:589px;width:1.2px;height:28.8px;background:#b4b4b4"></div><div style="left:751.9px;top:589px;width:1.2px;height:28.8px;background:#b4b4b4"></div><div style="left:17.5px;top:616.5px;width:867px;height:1.6px;background:#a3a3a3"></div><div style="left:17.5px;top:618.1px;width:867px;height:85.2px;background:#fff"></div><div style="left:17.5px;top:618.1px;width:33.8px;height:85.2px;background:#e6e6e6"></div><div style="left:17.5px;top:675.7px;width:33.8px;height:27.6px;background:#d2d2d2"></div><div style="left:17.5px;top:646.4px;width:867px;height:1.2px;background:#d0d0d0"></div><div style="left:17.5px;top:675.1px;width:867px;height:1.2px;background:#d0d0d0"></div><div style="left:17.5px;top:702.1px;width:867px;height:1.2px;background:#c4c4c4"></div><div style="left:134.2px;top:617.8px;width:1.2px;height:85.5px;background:#d0d0d0"></div><div style="left:217.7px;top:617.8px;width:1.2px;height:85.5px;background:#d0d0d0"></div><div style="left:301.1px;top:617.8px;width:1.2px;height:85.5px;background:#d0d0d0"></div><div style="left:384.4px;top:617.8px;width:1.2px;height:85.5px;background:#d0d0d0"></div><div style="left:468.4px;top:617.8px;width:1.2px;height:85.5px;background:#d0d0d0"></div><div style="left:550.9px;top:617.8px;width:1.2px;height:85.5px;background:#d0d0d0"></div><div style="left:634.4px;top:617.8px;width:1.2px;height:85.5px;background:#d0d0d0"></div><div style="left:751.9px;top:617.8px;width:1.2px;height:85.5px;background:#d0d0d0"></div><div style="left:50.6px;top:617.8px;width:1.3px;height:57.9px;background:#ababab"></div><div style="left:49.6px;top:675.7px;width:2.3px;height:27.6px;background:#1f6f43"></div><div style="left:883.5px;top:488.4px;width:1px;height:214.9px;background:#cfcfcf"></div><div style="left:17.5px;top:488.4px;width:1px;height:214.9px;background:#cfcfcf"></div><span class="l" style="left:29.54px;top:625.29px;font-size:19px;line-height:21.85px;color:#444;transform:scaleX(0.9000);transform-origin:0 0;">1</span><span class="l" style="left:29.54px;top:654.49px;font-size:19px;line-height:21.85px;color:#444;transform:scaleX(0.9000);transform-origin:0 0;">2</span><span class="l" style="left:29.54px;top:682.99px;font-size:19px;line-height:21.85px;color:#2a6e4a;transform:scaleX(0.9000);transform-origin:0 0;">3</span><svg class="g" style="left:53.60px;top:630.64px;width:33.00px;height:17.40px;fill:#0a0a0a;stroke:#0a0a0a;stroke-width:6" viewBox="0 -880 3000 1200" preserveAspectRatio="none"><text x="0" y="0" textLength="3000" lengthAdjust="spacingAndGlyphs" font-weight="500">コード</text></svg><svg class="g" style="left:137.70px;top:630.64px;width:28.80px;height:17.40px;fill:#0a0a0a;stroke:#0a0a0a;stroke-width:6" viewBox="0 -880 2000 1200" preserveAspectRatio="none"><text x="0" y="0" textLength="2000" lengthAdjust="spacingAndGlyphs" font-weight="500">氏名</text></svg><svg class="g" style="left:221.00px;top:630.64px;width:28.80px;height:17.40px;fill:#0a0a0a;stroke:#0a0a0a;stroke-width:6" viewBox="0 -880 2000 1200" preserveAspectRatio="none"><text x="0" y="0" textLength="2000" lengthAdjust="spacingAndGlyphs" font-weight="500">所属</text></svg><svg class="g" style="left:304.80px;top:630.64px;width:42.50px;height:17.40px;fill:#0a0a0a;stroke:#0a0a0a;stroke-width:6" viewBox="0 -880 3000 1200" preserveAspectRatio="none"><text x="0" y="0" textLength="3000" lengthAdjust="spacingAndGlyphs" font-weight="500">開始日</text></svg><svg class="g" style="left:387.30px;top:630.64px;width:42.50px;height:17.40px;fill:#0a0a0a;stroke:#0a0a0a;stroke-width:6" viewBox="0 -880 3000 1200" preserveAspectRatio="none"><text x="0" y="0" textLength="3000" lengthAdjust="spacingAndGlyphs" font-weight="500">終了日</text></svg><svg class="g" style="left:472.30px;top:630.64px;width:57.20px;height:17.40px;fill:#0a0a0a;stroke:#0a0a0a;stroke-width:6" viewBox="0 -880 4000 1200" preserveAspectRatio="none"><text x="0" y="0" textLength="4000" lengthAdjust="spacingAndGlyphs" font-weight="500">出勤日数</text></svg><svg class="g" style="left:554.80px;top:630.64px;width:58.00px;height:17.40px;fill:#0a0a0a;stroke:#0a0a0a;stroke-width:6" viewBox="0 -880 4000 1200" preserveAspectRatio="none"><text x="0" y="0" textLength="4000" lengthAdjust="spacingAndGlyphs" font-weight="500">欠勤日数</text></svg><svg class="g" style="left:638.30px;top:630.64px;width:98.20px;height:17.40px;fill:#0a0a0a;stroke:#0a0a0a;stroke-width:6" viewBox="0 -880 7000 1200" preserveAspectRatio="none"><text x="0" y="0" textLength="7000" lengthAdjust="spacingAndGlyphs" font-weight="500">有休日数（日）</text></svg><svg class="g" style="left:755.80px;top:630.64px;width:112.20px;height:17.40px;fill:#0a0a0a;stroke:#0a0a0a;stroke-width:6" viewBox="0 -880 8000 1200" preserveAspectRatio="none"><text x="0" y="0" textLength="8000" lengthAdjust="spacingAndGlyphs" font-weight="500">有休日数（時間）</text></svg><svg class="g" style="left:54.20px;top:659.80px;width:24.00px;height:17.04px;fill:#0a0a0a;stroke:#0a0a0a;stroke-width:6" viewBox="0 -880 1710 1200" preserveAspectRatio="none"><text x="0" y="0" textLength="1710" lengthAdjust="spacingAndGlyphs" font-weight="500">001</text></svg><svg class="g" style="left:137.70px;top:659.54px;width:57.80px;height:17.40px;fill:#0a0a0a;stroke:#0a0a0a;stroke-width:6" viewBox="0 -880 4000 1200" preserveAspectRatio="none"><text x="0" y="0" textLength="4000" lengthAdjust="spacingAndGlyphs" font-weight="500">名南太郎</text></svg><svg class="g" style="left:221.00px;top:659.54px;width:28.90px;height:17.40px;fill:#0a0a0a;stroke:#0a0a0a;stroke-width:6" viewBox="0 -880 2000 1200" preserveAspectRatio="none"><text x="0" y="0" textLength="2000" lengthAdjust="spacingAndGlyphs" font-weight="500">所長</text></svg><svg class="g" style="left:305.40px;top:659.80px;width:77.80px;height:17.04px;fill:#0a0a0a;stroke:#0a0a0a;stroke-width:6" viewBox="0 -880 5340 1200" preserveAspectRatio="none"><text x="0" y="0" textLength="5340" lengthAdjust="spacingAndGlyphs" font-weight="500">2022/03/01</text></svg><svg class="g" style="left:387.90px;top:659.80px;width:77.80px;height:17.04px;fill:#0a0a0a;stroke:#0a0a0a;stroke-width:6" viewBox="0 -880 5340 1200" preserveAspectRatio="none"><text x="0" y="0" textLength="5340" lengthAdjust="spacingAndGlyphs" font-weight="500">2022/03/31</text></svg><svg class="g" style="left:472.90px;top:659.80px;width:15.80px;height:17.04px;fill:#0a0a0a;stroke:#0a0a0a;stroke-width:6" viewBox="0 -880 1140 1200" preserveAspectRatio="none"><text x="0" y="0" textLength="1140" lengthAdjust="spacingAndGlyphs" font-weight="500">20</text></svg><svg class="g" style="left:555.40px;top:659.80px;width:7.80px;height:17.04px;fill:#0a0a0a;stroke:#0a0a0a;stroke-width:6" viewBox="0 -880 570 1200" preserveAspectRatio="none"><text x="0" y="0" textLength="570" lengthAdjust="spacingAndGlyphs" font-weight="500">0</text></svg><svg class="g" style="left:638.90px;top:659.80px;width:7.80px;height:17.04px;fill:#0a0a0a;stroke:#0a0a0a;stroke-width:6" viewBox="0 -880 570 1200" preserveAspectRatio="none"><text x="0" y="0" textLength="570" lengthAdjust="spacingAndGlyphs" font-weight="500">0</text></svg><svg class="g" style="left:756.40px;top:659.80px;width:7.80px;height:17.04px;fill:#0a0a0a;stroke:#0a0a0a;stroke-width:6" viewBox="0 -880 570 1200" preserveAspectRatio="none"><text x="0" y="0" textLength="570" lengthAdjust="spacingAndGlyphs" font-weight="500">0</text></svg><svg class="g" style="left:54.20px;top:688.50px;width:24.00px;height:17.04px;fill:#0a0a0a;stroke:#0a0a0a;stroke-width:6" viewBox="0 -880 1710 1200" preserveAspectRatio="none"><text x="0" y="0" textLength="1710" lengthAdjust="spacingAndGlyphs" font-weight="500">002</text></svg><svg class="g" style="left:137.70px;top:688.24px;width:57.80px;height:17.40px;fill:#0a0a0a;stroke:#0a0a0a;stroke-width:6" viewBox="0 -880 4000 1200" preserveAspectRatio="none"><text x="0" y="0" textLength="4000" lengthAdjust="spacingAndGlyphs" font-weight="500">名南花子</text></svg><svg class="g" style="left:221.00px;top:688.24px;width:28.90px;height:17.40px;fill:#0a0a0a;stroke:#0a0a0a;stroke-width:6" viewBox="0 -880 2000 1200" preserveAspectRatio="none"><text x="0" y="0" textLength="2000" lengthAdjust="spacingAndGlyphs" font-weight="500">総務</text></svg><svg class="g" style="left:305.40px;top:688.50px;width:77.80px;height:17.04px;fill:#0a0a0a;stroke:#0a0a0a;stroke-width:6" viewBox="0 -880 5340 1200" preserveAspectRatio="none"><text x="0" y="0" textLength="5340" lengthAdjust="spacingAndGlyphs" font-weight="500">2022/03/01</text></svg><svg class="g" style="left:387.90px;top:688.50px;width:77.80px;height:17.04px;fill:#0a0a0a;stroke:#0a0a0a;stroke-width:6" viewBox="0 -880 5340 1200" preserveAspectRatio="none"><text x="0" y="0" textLength="5340" lengthAdjust="spacingAndGlyphs" font-weight="500">2022/03/31</text></svg><svg class="g" style="left:472.90px;top:688.50px;width:15.80px;height:17.04px;fill:#0a0a0a;stroke:#0a0a0a;stroke-width:6" viewBox="0 -880 1140 1200" preserveAspectRatio="none"><text x="0" y="0" textLength="1140" lengthAdjust="spacingAndGlyphs" font-weight="500">20</text></svg><svg class="g" style="left:555.40px;top:688.50px;width:7.80px;height:17.04px;fill:#0a0a0a;stroke:#0a0a0a;stroke-width:6" viewBox="0 -880 570 1200" preserveAspectRatio="none"><text x="0" y="0" textLength="570" lengthAdjust="spacingAndGlyphs" font-weight="500">0</text></svg><svg class="g" style="left:638.90px;top:688.50px;width:7.80px;height:17.04px;fill:#0a0a0a;stroke:#0a0a0a;stroke-width:6" viewBox="0 -880 570 1200" preserveAspectRatio="none"><text x="0" y="0" textLength="570" lengthAdjust="spacingAndGlyphs" font-weight="500">1</text></svg><svg class="g" style="left:756.40px;top:688.50px;width:7.80px;height:17.04px;fill:#0a0a0a;stroke:#0a0a0a;stroke-width:6" viewBox="0 -880 570 1200" preserveAspectRatio="none"><text x="0" y="0" textLength="570" lengthAdjust="spacingAndGlyphs" font-weight="500">0</text></svg><svg class="a" style="left:51.6px;top:647.3px" width="9" height="9"><path d="M0 0H7.300L0 7.300Z" fill="#1f7a3f"/></svg><svg class="a" style="left:51.6px;top:676px" width="9" height="9"><path d="M0 0H7.300L0 7.300Z" fill="#1f7a3f"/></svg><svg class="a" style="left:469.3px;top:647.3px" width="9" height="9"><path d="M0 0H7.300L0 7.300Z" fill="#1f7a3f"/></svg><svg class="a" style="left:469.3px;top:676px" width="9" height="9"><path d="M0 0H7.300L0 7.300Z" fill="#1f7a3f"/></svg><svg class="a" style="left:635.3px;top:647.3px" width="9" height="9"><path d="M0 0H7.300L0 7.300Z" fill="#1f7a3f"/></svg><svg class="a" style="left:635.3px;top:676px" width="9" height="9"><path d="M0 0H7.300L0 7.300Z" fill="#1f7a3f"/></svg></div></body></html>
